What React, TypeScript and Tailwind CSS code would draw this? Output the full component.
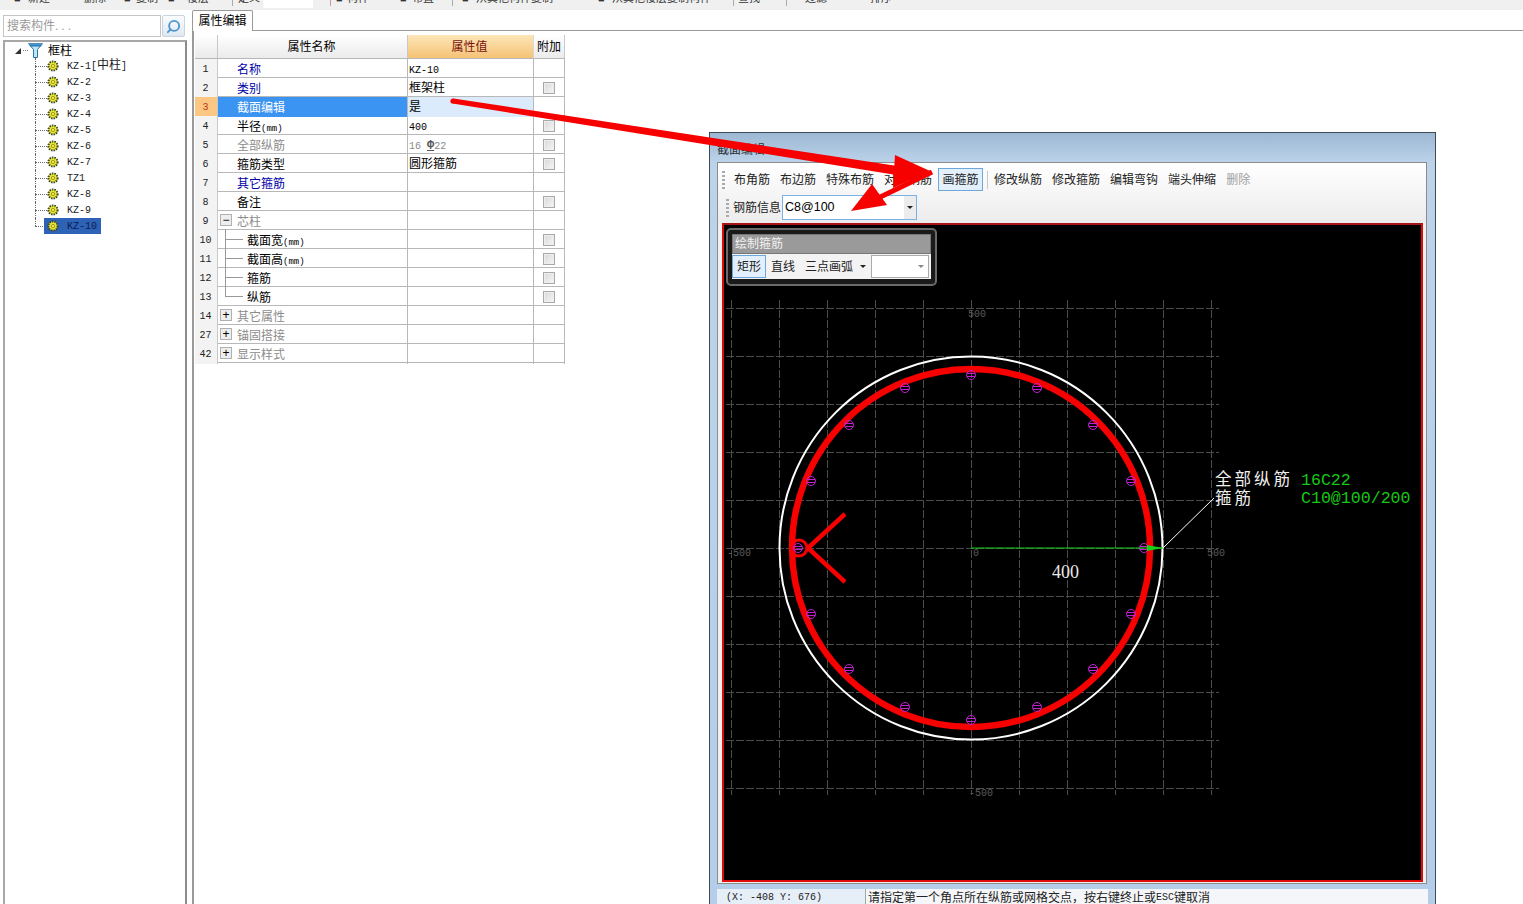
import React from "react";
import { Search } from "lucide-react";

const cjk = "font-['Liberation_Sans','Noto_Sans_CJK_SC',sans-serif]";
const mono = "font-['Liberation_Mono','Noto_Sans_CJK_SC',monospace]";

const topItems: [number, string][] = [
  [14, "■"], [28, "新建"], [68, "·"], [84, "删除"], [124, "■"], [136, "复制"], [168, "■"], [187, "楼层"],
  [238, "定义"], [336, "■"], [347, "构件"], [400, "■"], [412, "布置"], [462, "■"], [476, "从其他构件复制"],
  [598, "■"], [612, "从其他楼层复制构件"], [738, "查找"], [805, "过滤"], [870, "排序"],
];

function TopBar() {
  return (
    <div className={`relative h-[10px] shrink-0 overflow-hidden bg-[#f0f0f0] text-[11px] leading-[12px] text-[#333] ${cjk}`}>
      {topItems.map(([x, t]) => (
        <span key={x} className="absolute top-[-8px] whitespace-nowrap" style={{ left: x }}>{t}</span>
      ))}
      <span className="absolute left-[232px] top-0 h-[6px] w-px bg-[#aaa]" />
      <span className="absolute left-[263px] top-0 h-[8px] w-[50px] bg-white" />
      <span className="absolute left-[330px] top-0 h-[6px] w-px bg-[#c99]" />
      <span className="absolute left-[452px] top-0 h-[6px] w-px bg-[#aaa]" />
      <span className="absolute left-[733px] top-0 h-[6px] w-px bg-[#aaa]" />
      <span className="absolute left-[786px] top-0 h-[6px] w-px bg-[#aaa]" />
    </div>
  );
}

function Gear() {
  return (
    <svg width="12" height="12" viewBox="0 0 12 12" className="shrink-0">
      <circle cx="6" cy="6" r="4.6" fill="#e8e23a" stroke="#3c4a1c" strokeWidth="2" strokeDasharray="1.5 1" />
      <circle cx="6" cy="6" r="1.6" fill="#f6f04a" stroke="#6b6b1a" strokeWidth="0.6" />
    </svg>
  );
}

function RootIcon() {
  return (
    <svg width="15" height="15" viewBox="0 0 15 15" className="shrink-0">
      <path d="M0.5 0.5H14.5L13 3H2Z" fill="#3f9ad6" stroke="#23628f" strokeWidth="0.6" />
      <path d="M2.5 3H12.5L9.5 6.5V14.5H5.5V6.5Z" fill="#bfe4f8" stroke="#2a76ab" strokeWidth="1" />
    </svg>
  );
}

const treeItems = ["KZ-1", "KZ-2", "KZ-3", "KZ-4", "KZ-5", "KZ-6", "KZ-7", "TZ1", "KZ-8", "KZ-9", "KZ-10"];

function LeftPanel() {
  return (
    <aside className={`flex w-[187px] shrink-0 flex-col pl-[3px] ${cjk}`}>
      <div className="flex h-[30px] shrink-0 gap-px pb-[3px] pt-[5px]">
        <div className="flex h-[22px] w-[158px] items-center border border-[#c4c4c4] bg-white pl-[3px] text-[12px] text-[#9a9a9a]">
          搜索构件<span className="tracking-[3px]">...</span>
        </div>
        <div className="flex h-[22px] w-[23px] items-center justify-center rounded-[2px] border border-[#c8d4e0] bg-gradient-to-b from-[#fafcfe] to-[#dfe8f1]">
          <Search size={15} strokeWidth={3} className="-scale-x-100 text-[#4a95cf]" />
        </div>
      </div>
      <div className="min-h-0 flex-1 border-2 border-b-0 border-[#a8a8a8] border-r-[#8c8c8c] bg-white pl-[10px] pt-[1px]">
        <div className="flex h-[15px] items-center">
          <span className="h-0 w-0 border-b-[6px] border-l-[6px] border-b-[#333] border-l-transparent" />
          <span className="ml-[2px] w-[5px] border-t border-dotted border-[#777]" />
          <RootIcon />
          <span className="ml-[5px] text-[12px] text-black">框柱</span>
        </div>
        <div className="pl-[20px]">
          {treeItems.map((t, i) => {
            const last = i === treeItems.length - 1;
            return (
              <div key={t} className="relative flex h-4 items-center">
                <span className={`absolute left-0 top-0 border-l border-dotted border-[#666] ${last ? "h-2" : "h-4"}`} />
                <span className="w-[12px] border-t border-dotted border-[#666]" />
                {last ? (
                  <span className="ml-[-3px] flex h-4 w-[57px] items-center gap-[8px] bg-[#2e62b6] pl-[3px]">
                    <Gear />
                    <span className={`text-[10px] text-[#0b1d52] ${mono}`}>{t}</span>
                  </span>
                ) : (
                  <span className="flex items-center gap-[8px]">
                    <Gear />
                    <span className={`whitespace-nowrap text-[10px] text-[#222] ${mono}`}>
                      {t}
                      {i === 0 && (<>[<span className="text-[12px]">中柱</span>]</>)}
                    </span>
                  </span>
                )}
              </div>
            );
          })}
        </div>
      </div>
    </aside>
  );
}

type Row = {
  n: string;
  name: string;
  unit?: string;
  tone?: "blue" | "gray" | "black";
  val?: React.ReactNode;
  check?: boolean;
  box?: "+" | "-";
  child?: "mid" | "end";
  sel?: boolean;
};

const Lat = ({ children }: { children: React.ReactNode }) => <span className={`text-[10px] ${mono}`}>{children}</span>;

const rows: Row[] = [
  { n: "1", name: "名称", tone: "blue", val: <Lat>KZ-10</Lat> },
  { n: "2", name: "类别", tone: "blue", val: "框架柱", check: true },
  { n: "3", name: "截面编辑", tone: "blue", val: "是", sel: true },
  { n: "4", name: "半径", unit: "(mm)", val: <Lat>400</Lat>, check: true },
  {
    n: "5", name: "全部纵筋", tone: "gray", check: true,
    val: <span className={`text-[10px] text-[#8a8a8a] ${mono}`}>16 <span className="text-[12px] font-bold text-[#555] underline">Φ</span>22</span>,
  },
  { n: "6", name: "箍筋类型", val: "圆形箍筋", check: true },
  { n: "7", name: "其它箍筋", tone: "blue" },
  { n: "8", name: "备注", check: true },
  { n: "9", name: "芯柱", tone: "gray", box: "-" },
  { n: "10", name: "截面宽", unit: "(mm)", check: true, child: "mid" },
  { n: "11", name: "截面高", unit: "(mm)", check: true, child: "mid" },
  { n: "12", name: "箍筋", check: true, child: "mid" },
  { n: "13", name: "纵筋", check: true, child: "end" },
  { n: "14", name: "其它属性", tone: "gray", box: "+" },
  { n: "27", name: "锚固搭接", tone: "gray", box: "+" },
  { n: "42", name: "显示样式", tone: "gray", box: "+" },
];

const gridCols = "grid grid-cols-[23px_190px_126px_31px]";

function Check() {
  return <span className="block h-[12px] w-[12px] border border-[#a9a9a9] bg-gradient-to-br from-[#d8d8d8] to-[#f6f6f6] shadow-[inset_0_0_0_1px_#eeeeee]" />;
}

function PropTable() {
  return (
    <div className={`w-[370px] border-b border-[#b4b4b4] text-[12px] ${cjk}`}>
      <div className={`${gridCols} h-[23px]`}>
        <div className="border-r border-[#c8c8c8] bg-gradient-to-b from-white to-[#eaeaea]" />
        <div className="flex items-center justify-center border-r border-[#c8c8c8] bg-gradient-to-b from-white to-[#ebebeb] pt-[1px] pr-[2px] text-black">属性名称</div>
        <div className="flex items-center justify-center border-r border-[#d8d8d8] bg-gradient-to-b from-[#fde6b8] to-[#f5c274] pt-[1px] pr-[2px] text-[#7a1410]">属性值</div>
        <div className="flex items-center justify-center border-r border-[#c8c8c8] bg-gradient-to-b from-white to-[#ebebeb] pt-[1px] text-black">附加</div>
      </div>
      {rows.map((r) => {
        const nameColor = r.sel ? "text-white" : r.tone === "blue" ? "text-[#0000a8]" : r.tone === "gray" ? "text-[#8c8c8c]" : "text-black";
        return (
          <div key={r.n} className={`${gridCols} h-[19px] border-t border-[#b8b8b8]`}>
            <div className={`flex items-center justify-center border-r border-[#c8c8c8] pr-[1px] text-[10px] ${mono} ${r.sel ? "bg-[#fbc783] text-[#b23a1c]" : "bg-[#f3f3f3] text-[#222]"}`}>{r.n}</div>
            <div className={`relative flex items-center border-r border-[#b8b8b8] ${r.sel ? "bg-[#3c94f2]" : ""} ${r.child ? "pl-[29px]" : "pl-[19px]"} ${nameColor}`}>
              {r.box && (
                <span className="absolute left-[2px] top-[3px] flex h-[12px] w-[12px] items-center justify-center border border-[#b0b0b0] bg-[#eeeeee] text-[12px] leading-none text-black">
                  {r.box === "+" ? "+" : "−"}
                </span>
              )}
              {r.child && <span className={`absolute left-[7px] top-[-1px] w-px bg-[#999] ${r.child === "end" ? "h-[10px]" : "h-[19px]"}`} />}
              {r.child && <span className="absolute left-[7px] top-[9px] h-px w-[18px] bg-[#999]" />}
              <span className="whitespace-nowrap pt-[2px]">
                {r.name}
                {r.unit && <span className={`text-[9px] ${mono}`}>{r.unit}</span>}
              </span>
            </div>
            <div className={`flex items-center border-r border-[#b8b8b8] pl-[1px] text-black ${r.sel ? "bg-[#dcebfb]" : ""}`}>
              <span className="whitespace-nowrap">{r.val}</span>
            </div>
            <div className="flex items-center justify-center border-r border-[#b8b8b8]">{r.check && <Check />}</div>
          </div>
        );
      })}
    </div>
  );
}

function Grip() {
  return <span className="mr-[4px] h-[18px] w-[3px] shrink-0 bg-[repeating-linear-gradient(to_bottom,#a9a9a9_0,#a9a9a9_2px,transparent_2px,transparent_4px)]" />;
}

const tools = ["布角筋", "布边筋", "特殊布筋", "对齐钢筋"];
const tools2 = ["修改纵筋", "修改箍筋", "编辑弯钩", "端头伸缩"];

function CanvasDrawing() {
  const cx = 971;
  const cy = 548;
  const xs = Array.from({ length: 11 }, (_, i) => cx - 240 + i * 48);
  const ys = Array.from({ length: 11 }, (_, i) => cy - 240 + i * 48);
  const dots: [number, number][] = [
    [971, 375], [1037, 388], [1093, 425], [1131, 481], [1144, 548], [1131, 614], [1093, 669], [1037, 707],
    [971, 720], [905, 707], [849, 669], [811, 614], [798, 548], [811, 481], [849, 425], [905, 388],
  ];
  return (
    <svg viewBox="724 225 697 655" className="block h-full w-full">
      {xs.map((x) => (
        <line key={x} x1={x + 0.5} y1={300} x2={x + 0.5} y2={795} stroke="#4c4c4c" strokeWidth="1" strokeDasharray="8 2" />
      ))}
      {ys.map((y) => (
        <line key={y} x1={726} y1={y + 0.5} x2={1219} y2={y + 0.5} stroke="#4c4c4c" strokeWidth="1" strokeDasharray="8 2" />
      ))}
      <g fill="#5c5c5c" fontSize="10" fontFamily="Liberation Mono">
        <text x="968" y="317">500</text>
        <text x="969" y="796">-500</text>
        <text x="727" y="556">-500</text>
        <text x="1207" y="556">500</text>
        <text x="973" y="556">0</text>
      </g>
      <circle cx={cx} cy={cy} r="191.5" fill="none" stroke="#fff" strokeWidth="2" />
      <circle cx={cx} cy={cy} r="179" fill="none" stroke="#f60000" strokeWidth="6.5" />
      {dots.map(([x, y]) => (
        <g key={`${x}-${y}`} fill="none" stroke="#c020d0" strokeWidth="1">
          <circle cx={x} cy={y} r="4.5" />
          <line x1={x - 4} y1={y - 1.5} x2={x + 4} y2={y - 1.5} />
          <line x1={x - 4} y1={y + 1.5} x2={x + 4} y2={y + 1.5} />
        </g>
      ))}
      <circle cx="799" cy="548" r="8" fill="none" stroke="#f60000" strokeWidth="3" />
      <path d="M845 514L808 548L845 582" fill="none" stroke="#f60000" strokeWidth="4.5" />
      <line x1={cx} y1={cy} x2="1163" y2={cy} stroke="#18d018" strokeWidth="1" />
      <path d="M1147 545L1163 548L1147 551Z" fill="#18d018" />
      <line x1="1163" y1="548" x2="1214" y2="498" stroke="#fff" strokeWidth="1" />
      <text x="1052" y="578" fill="#e8e8e8" fontSize="18" fontFamily="Liberation Serif">400</text>
      <g fill="#f0f0f0" fontSize="16.5" letterSpacing="3" fontFamily="Noto Sans CJK SC">
        <text x="1215" y="485">全部纵筋</text>
        <text x="1215" y="504">箍筋</text>
      </g>
      <g fill="#14c814" fontSize="16.6" fontFamily="Liberation Mono">
        <text x="1301" y="485">16C22</text>
        <text x="1301" y="503">C10@100/200</text>
      </g>
    </svg>
  );
}

function Dialog() {
  return (
    <section className={`absolute left-[709px] top-[132px] flex h-[772px] w-[727px] flex-col overflow-hidden border border-b-0 border-[#3d4b55] bg-[linear-gradient(#9db8d3_0,#bcd3ea_30px,#b4cde8_100%)] px-[7px] text-[12px] ${cjk}`}>
      <div className="flex h-[29px] shrink-0 items-center text-black/80"><span className="pt-[5px]">截面编辑</span></div>
      <div className="flex h-[722px] w-[710px] shrink-0 flex-col border border-[#8c8c8c] bg-[#f0f0f0] pl-[4px] pr-[2px] text-[#222]">
        <div className="-ml-[4px] -mr-[2px] h-[60px] shrink-0 bg-gradient-to-b from-white to-[#ececec] pl-[4px] pr-[2px]">
          <div className="flex h-[31px] items-center pt-[2px]">
            <Grip />
            {tools.map((t) => (
              <span key={t} className="whitespace-nowrap px-[5px]">{t}</span>
            ))}
            <span className="ml-[1px] mr-[4px] flex h-[23px] w-[45px] items-center justify-center border border-[#6ea7dc] bg-[#e3f0fb]">画箍筋</span>
            <span className="mr-[1px] h-[18px] w-px bg-[#c8c8c8]" />
            {tools2.map((t) => (
              <span key={t} className="whitespace-nowrap px-[5px]">{t}</span>
            ))}
            <span className="whitespace-nowrap px-[5px] text-[#a0a0a0]">删除</span>
          </div>
          <div className="flex h-[27px] items-center pl-[4px]">
            <Grip />
            <span className="whitespace-nowrap">钢筋信息</span>
            <div className="ml-[1px] flex h-[25px] w-[135px] items-center justify-between border border-[#78b2e8] bg-white pl-[2px] text-[12.5px] text-black">
              C8@100
              <span className="flex h-full w-[12px] items-center justify-center bg-[#ececec]">
                <span className="h-0 w-0 border-x-[3px] border-t-[3px] border-x-transparent border-t-[#222]" />
              </span>
            </div>
          </div>
        </div>
        <div className="relative h-[659px] w-[701px] shrink-0 border-2 border-[#e00a0a] border-t-[#a81414] bg-black">
          <CanvasDrawing />
          <div className="absolute left-[2px] top-[3px] h-[58px] w-[211px] rounded-[5px] border-[2px] border-[#6a6a6a] bg-[#1a1a1a] p-[4px]">
            <div className="flex h-[20px] items-center border border-[#777] bg-[#9a9a9a] pl-[2px] text-[#f2f2f2]">绘制箍筋</div>
            <div className="flex h-[25px] items-center bg-[#f3f3f3] text-[#222]">
              <span className="flex h-[23px] w-[34px] items-center justify-center border border-[#6ea7dc] bg-[#e3f0fb]">矩形</span>
              <span className="ml-[5px] whitespace-nowrap">直线</span>
              <span className="ml-[10px] whitespace-nowrap">三点画弧</span>
              <span className="ml-[7px] h-0 w-0 border-x-[3px] border-t-[3px] border-x-transparent border-t-[#222]" />
              <span className="ml-[5px] flex h-[23px] w-[58px] items-center justify-end border border-[#aaa] bg-white pr-[4px]">
                <span className="h-0 w-0 border-x-[3px] border-t-[3px] border-x-transparent border-t-[#888]" />
              </span>
            </div>
          </div>
        </div>
      </div>
      <div className="mt-[5px] flex h-[17px] shrink-0 items-center bg-[#e6eef7] text-[#222]">
        <span className={`flex h-full w-[148px] items-center pl-[9px] text-[10px] ${mono}`}>(X: -408 Y: 676)</span>
        <span className="flex h-full flex-1 items-center whitespace-nowrap border-l border-[#9aa] bg-[#f4f6f9] pl-[2px]">
          请指定第一个角点所在纵筋或网格交点，按右键终止或<span className={`text-[10px] ${mono}`}>ESC</span>键取消
        </span>
      </div>
    </section>
  );
}

function Arrows() {
  return (
    <svg className="pointer-events-none absolute left-0 top-0 z-10" width="1523" height="904" viewBox="0 0 1523 904">
      <circle cx="453" cy="101" r="2.6" fill="#f60000" />
      <path d="M453.4 98.5L900.7 166.5L899.3 175.5L452.6 103.5Z" fill="#f60000" />
      <path d="M930 171L895 155L893 188Z" fill="#f60000" />
      <line x1="932" y1="172" x2="870" y2="202" stroke="#f60000" strokeWidth="5" />
      <path d="M851 211L872 184L887 205Z" fill="#f60000" />
    </svg>
  );
}

export default function App() {
  return (
    <div className={`relative flex h-[904px] w-[1523px] flex-col overflow-hidden bg-white ${cjk}`}>
      <TopBar />
      <div className="flex min-h-0 flex-1">
        <LeftPanel />
        <main className="flex min-w-0 flex-1 flex-col pl-[5px]">
          <div className="flex h-[20px] shrink-0 items-end">
            <div className="flex h-[21px] w-[61px] translate-y-px items-center justify-center rounded-t-[2px] border border-b-0 border-[#9a9a9a] bg-white text-[12px] text-black">属性编辑</div>
          </div>
          <div className="flex-1 border-l-2 border-t border-[#9a9a9a] pl-[1px] pt-[4px]">
            <PropTable />
          </div>
        </main>
      </div>
      <Dialog />
      <Arrows />
    </div>
  );
}
